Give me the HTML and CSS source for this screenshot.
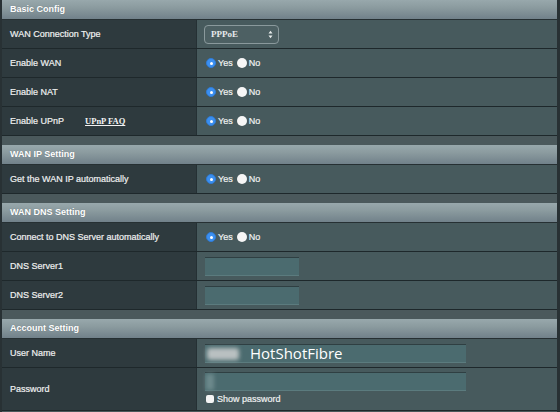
FILE: index.html
```html
<!DOCTYPE html>
<html>
<head>
<meta charset="utf-8">
<link rel="stylesheet" href="styles.css">
</head>
<body>
<div class="page">
  <div class="section">
    <div class="sec-head">Basic Config</div>
    <div class="row">
      <div class="label">WAN Connection Type</div>
      <div class="value">
        <div class="select"><span>PPPoE</span>
          <svg class="arrows" width="5" height="9" viewBox="0 0 5 9"><path d="M0.5 3.5 L2.5 0.8 L4.5 3.5 Z M0.5 5.5 L2.5 8.2 L4.5 5.5 Z" fill="#e8ecec"/></svg>
        </div>
      </div>
    </div>
    <div class="row">
      <div class="label">Enable WAN</div>
      <div class="value"><div class="radios"><span class="radio on"></span><span class="rtext">Yes</span><span class="radio off"></span><span class="rtext">No</span></div></div>
    </div>
    <div class="row">
      <div class="label">Enable NAT</div>
      <div class="value"><div class="radios"><span class="radio on"></span><span class="rtext">Yes</span><span class="radio off"></span><span class="rtext">No</span></div></div>
    </div>
    <div class="row">
      <div class="label">Enable UPnP <a class="faq">UPnP FAQ</a></div>
      <div class="value"><div class="radios"><span class="radio on"></span><span class="rtext">Yes</span><span class="radio off"></span><span class="rtext">No</span></div></div>
    </div>
  </div>

  <div class="section">
    <div class="sec-head">WAN IP Setting</div>
    <div class="row">
      <div class="label">Get the WAN IP automatically</div>
      <div class="value"><div class="radios"><span class="radio on"></span><span class="rtext">Yes</span><span class="radio off"></span><span class="rtext">No</span></div></div>
    </div>
  </div>

  <div class="section">
    <div class="sec-head">WAN DNS Setting</div>
    <div class="row">
      <div class="label">Connect to DNS Server automatically</div>
      <div class="value"><div class="radios"><span class="radio on"></span><span class="rtext">Yes</span><span class="radio off"></span><span class="rtext">No</span></div></div>
    </div>
    <div class="row">
      <div class="label">DNS Server1</div>
      <div class="value"><div class="input short"></div></div>
    </div>
    <div class="row">
      <div class="label">DNS Server2</div>
      <div class="value"><div class="input short"></div></div>
    </div>
  </div>

  <div class="section last">
    <div class="sec-head">Account Setting</div>
    <div class="row">
      <div class="label">User Name</div>
      <div class="value">
        <div class="input long user"><span class="blur blur-user"></span><span class="typed">HotShotFibre</span></div>
      </div>
    </div>
    <div class="row tall">
      <div class="label">Password</div>
      <div class="value stack">
        <div class="input long"><span class="blur blur-pass"></span></div>
        <div class="check-line"><span class="check"></span><span class="ctext">Show password</span></div>
      </div>
    </div>
  </div>
</div>
</body>
</html>
```

FILE: styles.css
```css
html, body {
  margin: 0;
  padding: 0;
}
body {
  background: #283134;
  font-family: "Liberation Sans", Arial, sans-serif;
  font-size: 9px;
  color: #eef0f0;
  width: 560px;
  height: 412px;
  overflow: hidden;
  -webkit-text-stroke: 0.2px currentColor;
}
.page {
  margin-left: 2px;
  width: 555px;
  background: #4b595c;
  height: 412px;
}
.section {
  margin-bottom: 9px;
}
.section.last {
  margin-bottom: 0;
}
.sec-head {
  height: 19px;
  line-height: 19px;
  border-bottom: 1px solid #263033;
  background: linear-gradient(to bottom, #98a8ac 0%, #8b9b9f 40%, #71818a 100%);
  padding-left: 8px;
  font-weight: bold;
  color: #ffffff;
  -webkit-text-stroke: 0;
  text-shadow: 0 0 1px rgba(0,0,0,0.25);
}
.row {
  display: grid;
  grid-template-columns: 195px 1fr;
  height: 28px;
  border-bottom: 1px solid #1e282b;
}
.row.tall {
  height: 42px;
}
.label {
  background: #2e3a3e;
  border-right: 1px solid #253034;
  padding-left: 8px;
  display: flex;
  align-items: center;
  white-space: nowrap;
}
.faq {
  font-family: "Liberation Serif", "Times New Roman", serif;
  font-weight: bold;
  font-size: 8.5px;
  text-decoration: underline;
  margin-left: 21px;
  color: #f2f2f2;
  -webkit-text-stroke: 0;
}
.value {
  background: #475a5d;
  padding-left: 7px;
  display: flex;
  align-items: center;
}
.value.stack {
  flex-direction: column;
  align-items: flex-start;
  justify-content: flex-start;
  padding-top: 4px;
  box-sizing: border-box;
}
.select {
  box-sizing: border-box;
  width: 75px;
  height: 19px;
  border: 1px solid #8a999c;
  border-radius: 4px;
  background: #4d6063;
  display: flex;
  align-items: center;
  justify-content: space-between;
  padding: 0 5px 0 6px;
}
.select span {
  font-family: "Liberation Serif", "Times New Roman", serif;
  font-weight: bold;
  font-size: 9px;
  color: #e6e9ea;
  -webkit-text-stroke: 0;
}
.arrows {
  display: block;
}
.radios {
  display: flex;
  align-items: center;
  margin-left: 2px;
}
.radio {
  width: 10px;
  height: 10px;
  border-radius: 50%;
  box-sizing: border-box;
  display: inline-block;
  position: relative;
}
.radio.on {
  background: #3b8ff0;
  border: 1px solid #2f7bd6;
}
.radio.on::after {
  content: "";
  position: absolute;
  width: 3px;
  height: 3px;
  border-radius: 50%;
  background: #fff;
  left: 2.5px;
  top: 2.5px;
}
.radio.off {
  background: #f6f6f6;
  margin-left: 4px;
}
.rtext {
  margin-left: 2px;
  color: #f0f2f2;
}
.input {
  height: 19px;
  box-sizing: border-box;
  background: #4b6b6f;
  border-top: 1px solid #2f3f42;
  border-bottom: 1px solid #5b7b7e;
  margin-left: 1px;
  position: relative;
}
.input.short {
  width: 94px;
}
.input.long {
  width: 261px;
}
.blur {
  position: absolute;
  filter: blur(2px);
}
.blur-user {
  left: 2px;
  top: 3px;
  width: 32px;
  height: 12px;
  background: #b9c0c1;
  border-radius: 3px;
}
.blur-pass {
  left: 1px;
  top: 1px;
  width: 8px;
  height: 16px;
  background: #6e8a8d;
}
.typed {
  position: absolute;
  left: 45px;
  top: -2px;
  font-family: "Open Sans", "Noto Sans", sans-serif;
  font-size: 15px;
  line-height: 20px;
  color: #ffffff;
  -webkit-text-stroke: 0;
}
.check-line {
  display: flex;
  align-items: center;
  margin-top: 3px;
  margin-left: 2px;
}
.check {
  width: 8px;
  height: 8px;
  background: #f4f4f4;
  border-radius: 2px;
  display: inline-block;
}
.ctext {
  margin-left: 3px;
}
```
